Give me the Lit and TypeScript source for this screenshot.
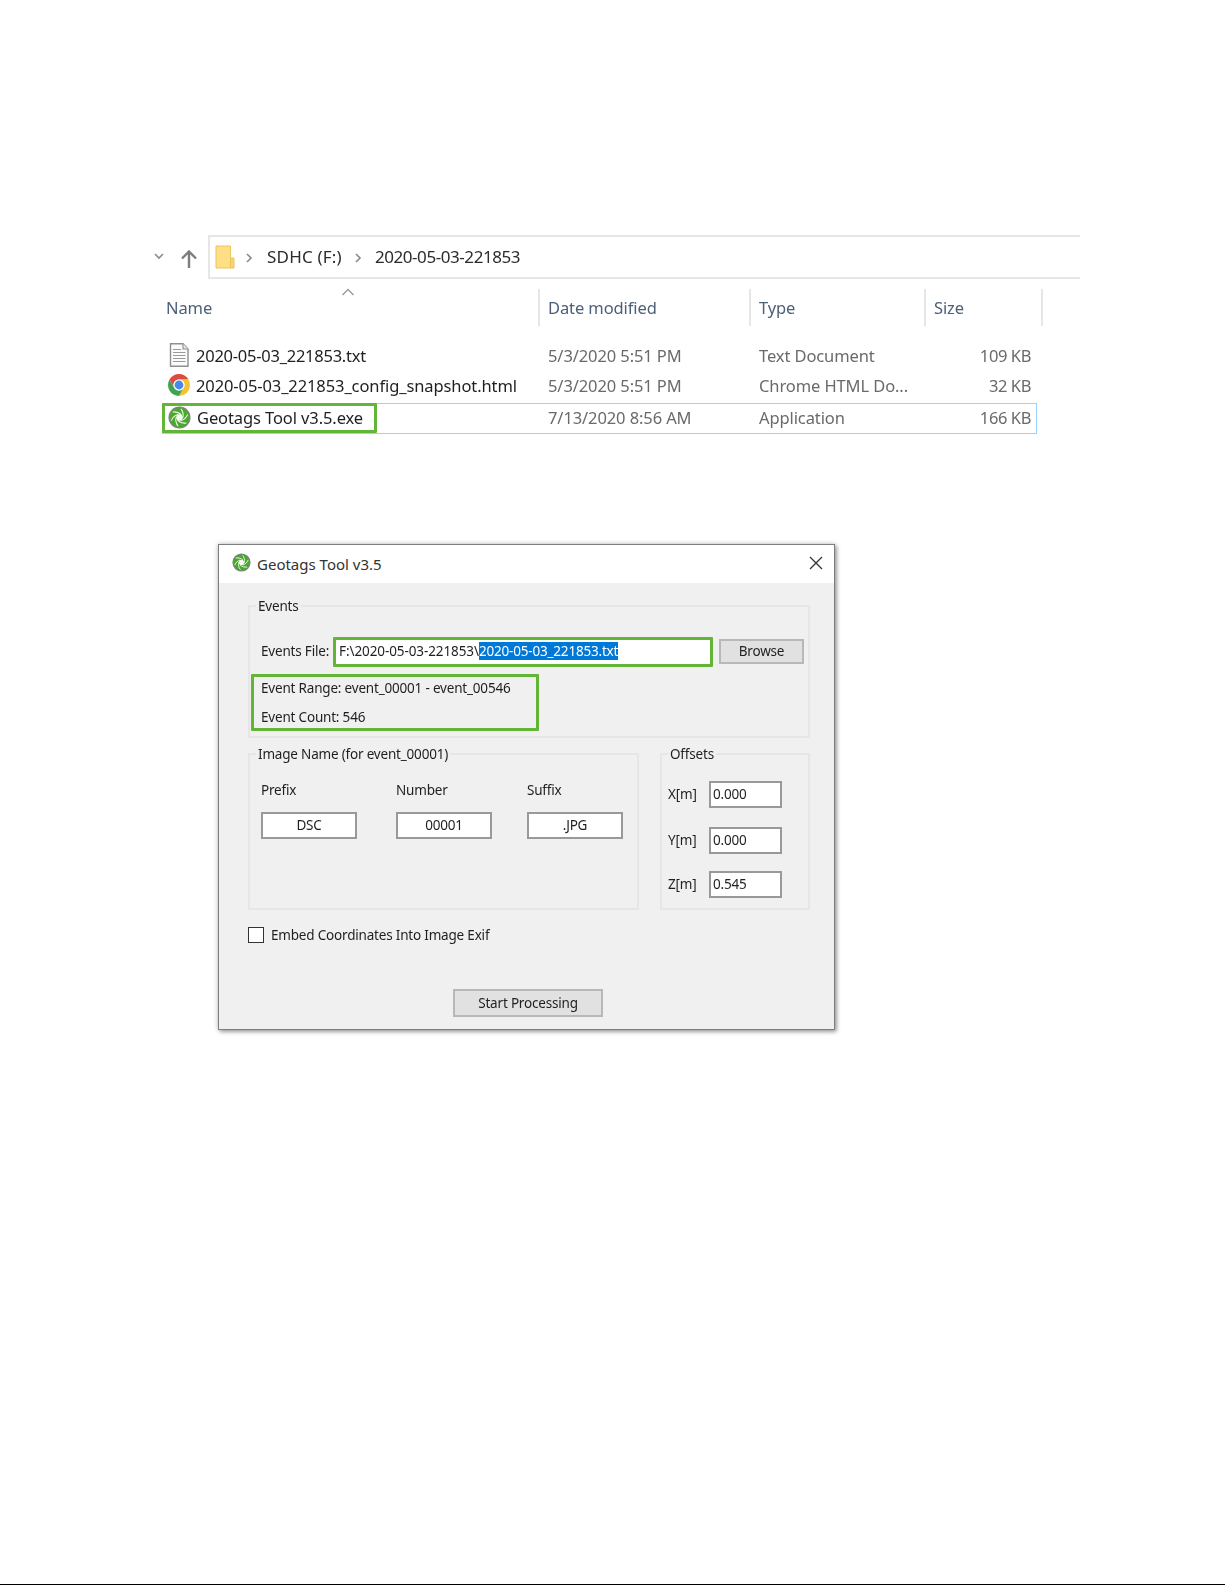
import { LitElement, html, css, svg } from "lit";
import { customElement } from "lit/decorators.js";

const aperture = () => html`<svg class="ap" viewBox="0 0 24 24">
  <circle cx="12" cy="12" r="11.5" fill="#7b857b"/>
  <circle cx="12" cy="12" r="9.8" fill="#45ad25"/>
  ${[0, 60, 120, 180, 240, 300].map(
    (a) => svg`<path transform="rotate(${a} 12 12)" d="M15.6 12 C16.2 9 15.6 5.6 13.4 3" fill="none" stroke="#eef8e8" stroke-width="1.1"/>`
  )}
  <path d="M15.8 12L13.9 15.3H10.1L8.2 12L10.1 8.7H13.9Z" fill="#f6fbf2"/>
</svg>`;

const chrome = () => html`<svg class="ic" viewBox="2 2 20 20">
  <path d="M3.34 7A10 10 0 0 1 20.66 7H12A5 5 0 0 0 7.67 14.5Z" fill="#dd4b3e"/>
  <path d="M20.66 7A10 10 0 0 1 12 22L16.33 14.5A5 5 0 0 0 12 7Z" fill="#f5c332"/>
  <path d="M12 22A10 10 0 0 1 3.34 7L7.67 14.5A5 5 0 0 0 16.33 14.5Z" fill="#3fa354"/>
  <circle cx="12" cy="12" r="5" fill="#fff"/>
  <circle cx="12" cy="12" r="4" fill="#4a87ec"/>
</svg>`;

const doc = () => html`<svg class="ic tall" viewBox="0 0 22 24">
  <path d="M2.5 .8H15L20 6V23.2H2.5Z" fill="#fbfbfb" stroke="#8f8f8f" stroke-width="1.4"/>
  <path d="M15 .8V6H20" fill="#e6e6e6" stroke="#8f8f8f" stroke-width="1.1"/>
  <path d="M5 6.5H13M5 9.5H17.5M5 12.5H17.5M5 15.5H17.5M5 18.5H17.5" stroke="#9a9a9a" stroke-width="1.2"/>
</svg>`;

@customElement("app-root")
export class AppRoot extends LitElement {
  static styles = css`
    :host {
      display: block;
      height: 1585px;
      box-sizing: border-box;
      border-bottom: 1px solid #000;
      background: #fff;
      overflow: hidden;
      font-family: "Noto Sans", "Liberation Sans", sans-serif;
    }
    .explorer {
      padding-top: 235px;
      filter: blur(0.45px);
      font-size: 16.5px;
      letter-spacing: -0.1px;
    }
    .nav {
      display: flex;
      align-items: center;
      height: 44px;
      padding-left: 153px;
    }
    .chev { width: 12px; height: 8px; margin-top: -2px; }
    .up { width: 18px; height: 20px; margin: 3px 0 0 15px; }
    .bar {
      margin-left: 10px;
      width: 872px;
      height: 44px;
      box-sizing: border-box;
      border: 2px solid #e6e6e6;
      border-right: 0;
      display: flex;
      align-items: center;
      padding-left: 5px;
      color: #2b2b2b;
    }
    .folder { width: 20px; height: 24px; }
    .gt { width: 8px; height: 10px; margin: 2px 14px 0 10px; }
    .crumb + .gt { margin-left: 12px; }
    .crumb { margin-top: -2px; font-size: 17px; }
    .crumb.drive { letter-spacing: 0.2px; }
    .crumb.dir { letter-spacing: -0.43px; margin-left: -1px; }
    .cols {
      display: grid;
      grid-template-columns: 377px 211px 175px 117px;
      margin-left: 162px;
      width: 880px;
    }
    .cols.head {
      grid-template-columns: 378px 211px 175px 117px;
      margin-top: 10px;
      height: 37px;
      color: #4c607a;
      align-items: center;
      position: relative;
    }
    .head > div {
      height: 37px;
      display: flex;
      align-items: center;
      box-sizing: border-box;
      padding-left: 8px;
      border-right: 2px solid #e6e6e6;
      position: relative;
    }
    .head > div:first-child { padding-left: 4px; }
    .caret {
      position: absolute;
      left: 179px;
      top: -1px;
      width: 14px;
      height: 8px;
    }
    .rows { margin-top: 14px; color: #6a6a6a; }
    .row { height: 30px; align-items: center; }
    .row.sel {
      grid-template-columns: 376px 211px 175px 117px;
      height: 31px;
      margin-top: 3px;
      box-sizing: border-box;
      border: 1px solid #99d1ff;
      width: 875px;
    }
    .row > div { padding-left: 9px; white-space: nowrap; }
    .row.sel > div { margin-top: -2px; }
    .row .size { text-align: right; padding: 0 11px 0 0; letter-spacing: -0.4px; }
    .row .name {
      padding-left: 6px;
      display: flex;
      align-items: center;
      gap: 6px;
      color: #1f1f1f;
    }
    .row .name.tight { letter-spacing: -0.25px; }
    .ic { width: 22px; height: 22px; flex: none; }
    .ic.tall { height: 24px; }
    .row.sel > .name.marked {
      box-sizing: border-box;
      width: 215px;
      height: 30px;
      margin: -2px 0 0 -1px;
      padding-left: 3px;
      border: 3px solid #62b536;
      border-radius: 1px;
    }
    .ap { width: 23px; height: 23px; flex: none; }

    .dialog {
      margin: 110px 0 0 218px;
      width: 617px;
      height: 486px;
      box-sizing: border-box;
      border: 1px solid #7d7d7d;
      background: #f0f0f0;
      box-shadow: 2px 2px 4px rgba(0, 0, 0, 0.3), 0 0 5px rgba(0, 0, 0, 0.25);
      filter: blur(0.45px);
      font-size: 13.5px;
      letter-spacing: -0.19px;
      color: #1f1f1f;
    }
    .title {
      height: 38px;
      background: #fff;
      display: flex;
      align-items: center;
      padding: 0 11px 0 13px;
      gap: 6px;
      font-size: 15px;
      letter-spacing: 0;
      color: #333;
    }
    .title .ap { width: 19px; height: 19px; margin-top: -3px; }
    .x { width: 14px; height: 14px; margin-left: auto; margin-top: -3px; }
    .body { padding: 14px 24px 0 29px; }
    fieldset {
      margin: 0;
      padding: 0;
      min-width: 0;
      border: 2px solid #e6e6e6;
      box-sizing: border-box;
    }
    legend {
      margin-left: 6px;
      padding: 0 2px;
      height: 18px;
      line-height: 18px;
    }
    .events { height: 141px; }
    .file {
      display: flex;
      align-items: center;
      padding: 22px 0 0 11px;
    }
    .file .lbl { width: 72px; white-space: nowrap; margin-top: -2px; }
    .path {
      box-sizing: border-box;
      width: 380px;
      height: 30px;
      border: 3px solid #62b536;
      border-radius: 1px;
      background: #fff;
      padding: 0 0 0 3px;
      line-height: 22px;
      white-space: nowrap;
      letter-spacing: -0.09px;
    }
    .path mark { background: #0078d7; color: #fff; letter-spacing: -0.19px; }
    .btn {
      box-sizing: border-box;
      background: #e1e1e1;
      border: 2px solid #b8b8b8;
      text-align: center;
      display: flex;
      align-items: center;
      justify-content: center;
    }
    .browse { width: 85px; height: 25px; margin: -2px 0 0 6px; }
    .range {
      box-sizing: border-box;
      margin: 7px 0 0 1px;
      width: 288px;
      height: 57px;
      border: 3px solid #62b536;
      border-radius: 1px;
      padding-left: 7px;
      display: grid;
      grid-template-rows: 22px 22px;
      row-gap: 7px;
      line-height: 22px;
    }
    .pair {
      display: grid;
      grid-template-columns: 391px 150px;
      column-gap: 21px;
      margin-top: 7px;
    }
    .pair fieldset { height: 165px; }
    .names {
      display: grid;
      grid-template-columns: 135px 131px 96px;
      padding: 18px 0 0 11px;
    }
    .names .cap { height: 18px; line-height: 18px; margin-bottom: 13px; }
    .field {
      box-sizing: border-box;
      height: 27px;
      background: #fff;
      border: 2px solid #999;
      line-height: 22px;
    }
    .field.c { text-align: center; width: 96px; }
    .offs {
      display: grid;
      grid-template-rows: 46px 44px 27px;
      padding: 18px 0 0 6px;
    }
    .off { display: grid; grid-template-columns: 41px 73px; line-height: 27px; }
    .off .field { padding-left: 2px; line-height: 22px; }
    .check {
      display: flex;
      align-items: center;
      gap: 7px;
      height: 16px;
      margin-top: 17px;
    }
    .box {
      width: 16px;
      height: 16px;
      box-sizing: border-box;
      border: 1.5px solid #333;
      background: #fff;
    }
    .start { width: 150px; height: 28px; margin: 46px 0 0 205px; }
  `;

  render() {
    return html`
      <section class="explorer">
        <div class="nav">
          <svg class="chev" viewBox="0 0 12 8"><path d="M2 2l4 4 4-4" fill="none" stroke="#8a8a8a" stroke-width="1.6"/></svg>
          <svg class="up" viewBox="0 0 18 20"><path d="M9 19V3M2 9.5L9 2.5l7 7" fill="none" stroke="#7d7d7d" stroke-width="2.4"/></svg>
          <div class="bar">
            <svg class="folder" viewBox="0 0 20 24">
              <path d="M1 1H15.5V23H1Z" fill="#ffdf85" stroke="#e9c65e" stroke-width="1"/>
              <path d="M15.5 13H19V23H15.5Z" fill="#fbd36b" stroke="#e9c65e" stroke-width="1"/>
            </svg>
            <svg class="gt" viewBox="0 0 8 10"><path d="M2 1l4 4-4 4" fill="none" stroke="#8a8a8a" stroke-width="1.6"/></svg>
            <span class="crumb drive">SDHC (F:)</span>
            <svg class="gt" viewBox="0 0 8 10"><path d="M2 1l4 4-4 4" fill="none" stroke="#8a8a8a" stroke-width="1.6"/></svg>
            <span class="crumb dir">2020-05-03-221853</span>
          </div>
        </div>
        <div class="cols head">
          <div>Name<svg class="caret" viewBox="0 0 14 8"><path d="M1.5 7L7 1.5 12.5 7" fill="none" stroke="#9a9a9a" stroke-width="1.4"/></svg></div>
          <div>Date modified</div>
          <div>Type</div>
          <div>Size</div>
        </div>
        <div class="rows">
          <div class="cols row">
            <div class="name tight">${doc()}2020-05-03_221853.txt</div>
            <div>5/3/2020 5:51 PM</div>
            <div>Text Document</div>
            <div class="size">109 KB</div>
          </div>
          <div class="cols row">
            <div class="name">${chrome()}2020-05-03_221853_config_snapshot.html</div>
            <div>5/3/2020 5:51 PM</div>
            <div>Chrome HTML Do...</div>
            <div class="size">32 KB</div>
          </div>
          <div class="cols row sel">
            <div class="name marked">${aperture()}Geotags Tool v3.5.exe</div>
            <div>7/13/2020 8:56 AM</div>
            <div>Application</div>
            <div class="size">166 KB</div>
          </div>
        </div>
      </section>

      <section class="dialog">
        <div class="title">
          ${aperture()}<span>Geotags Tool v3.5</span>
          <svg class="x" viewBox="0 0 14 14"><path d="M1 1L13 13M13 1L1 13" stroke="#333" stroke-width="1.3"/></svg>
        </div>
        <div class="body">
          <fieldset class="events">
            <legend>Events</legend>
            <div class="file">
              <span class="lbl">Events File:</span>
              <div class="path">F:\\2020-05-03-221853\\<mark>2020-05-03_221853.txt</mark></div>
              <div class="btn browse">Browse</div>
            </div>
            <div class="range">
              <div>Event Range: event_00001 - event_00546</div>
              <div>Event Count: 546</div>
            </div>
          </fieldset>
          <div class="pair">
            <fieldset>
              <legend>Image Name (for event_00001)</legend>
              <div class="names">
                <div><div class="cap">Prefix</div><div class="field c">DSC</div></div>
                <div><div class="cap">Number</div><div class="field c">00001</div></div>
                <div><div class="cap">Suffix</div><div class="field c">.JPG</div></div>
              </div>
            </fieldset>
            <fieldset>
              <legend>Offsets</legend>
              <div class="offs">
                <div class="off"><span>X[m]</span><div class="field">0.000</div></div>
                <div class="off"><span>Y[m]</span><div class="field">0.000</div></div>
                <div class="off"><span>Z[m]</span><div class="field">0.545</div></div>
              </div>
            </fieldset>
          </div>
          <div class="check"><div class="box"></div><span>Embed Coordinates Into Image Exif</span></div>
          <div class="btn start">Start Processing</div>
        </div>
      </section>
    `;
  }
}
